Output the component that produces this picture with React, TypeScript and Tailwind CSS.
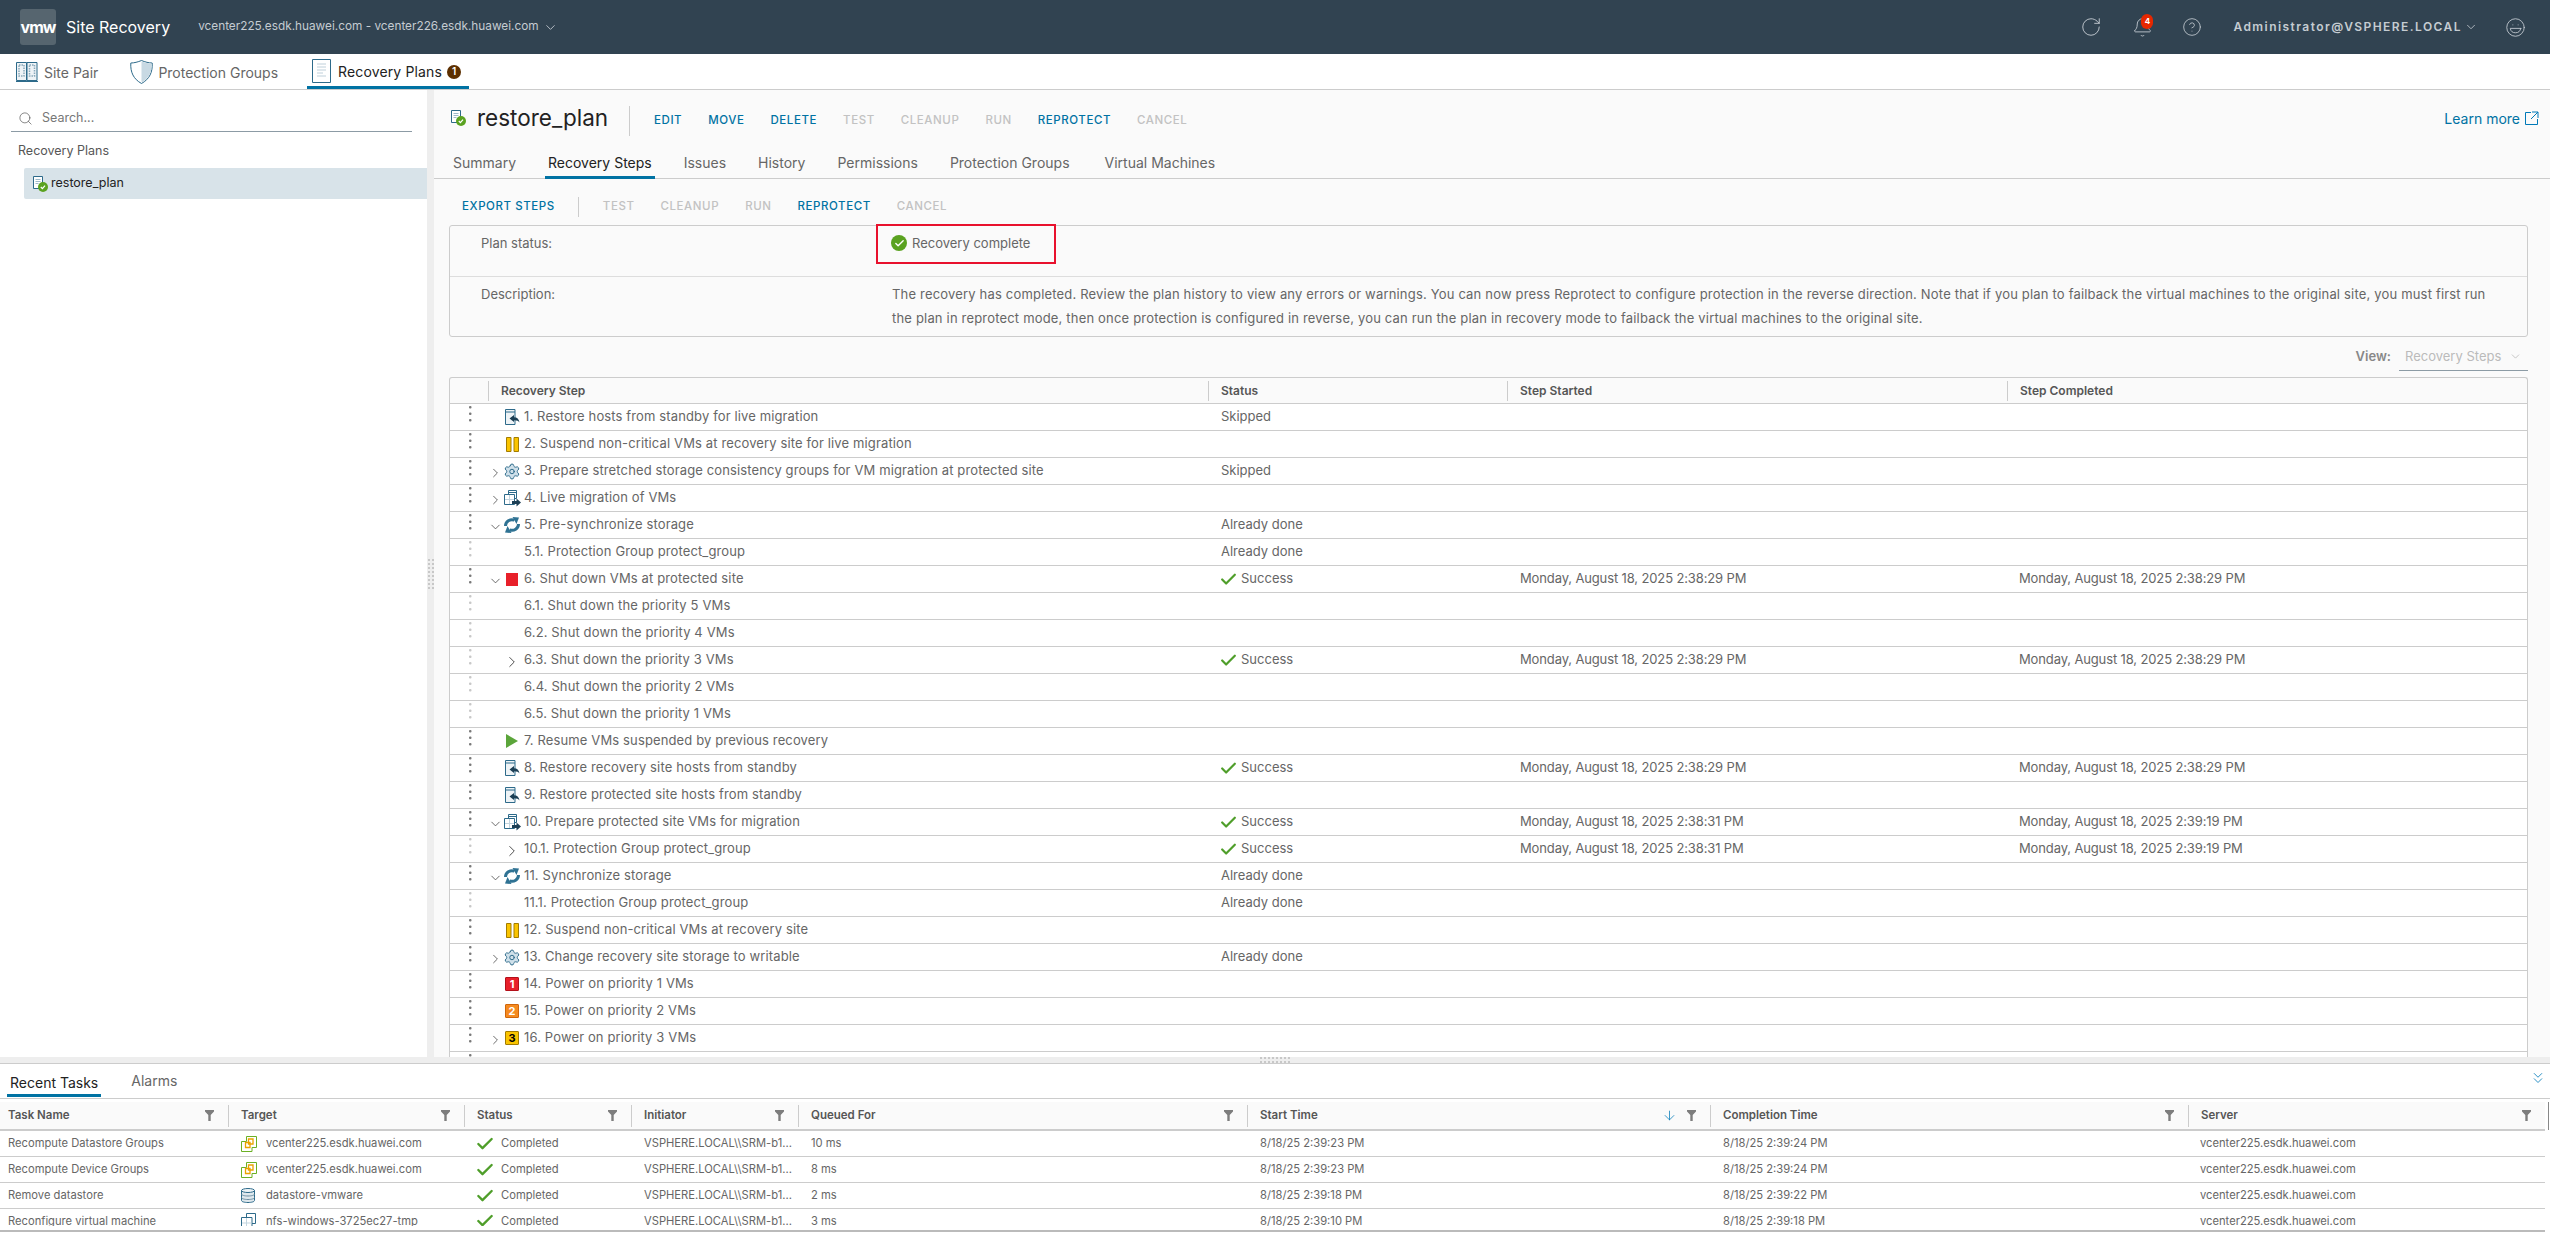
import { ArrowDown, Check, ChevronDown, ChevronRight, ChevronsDown, CircleHelp, Laugh, RotateCw, Search, Settings, Bell } from "lucide-react";

type IconName = "standby" | "suspend" | "gear" | "migrate" | "sync" | "stop" | "play" | "p1" | "p2" | "p3";

type Step = {
  name: string;
  icon?: IconName;
  caret?: "right" | "down";
  sub?: boolean;
  status?: string;
  started?: string;
  completed?: string;
};

const T1 = "Monday, August 18, 2025 2:38:29 PM";
const T2 = "Monday, August 18, 2025 2:38:31 PM";
const T3 = "Monday, August 18, 2025 2:39:19 PM";

const steps: Step[] = [
  { name: "1. Restore hosts from standby for live migration", icon: "standby", status: "Skipped" },
  { name: "2. Suspend non-critical VMs at recovery site for live migration", icon: "suspend" },
  { name: "3. Prepare stretched storage consistency groups for VM migration at protected site", icon: "gear", caret: "right", status: "Skipped" },
  { name: "4. Live migration of VMs", icon: "migrate", caret: "right" },
  { name: "5. Pre-synchronize storage", icon: "sync", caret: "down", status: "Already done" },
  { name: "5.1. Protection Group protect_group", sub: true, status: "Already done" },
  { name: "6. Shut down VMs at protected site", icon: "stop", caret: "down", status: "Success", started: T1, completed: T1 },
  { name: "6.1. Shut down the priority 5 VMs", sub: true },
  { name: "6.2. Shut down the priority 4 VMs", sub: true },
  { name: "6.3. Shut down the priority 3 VMs", sub: true, caret: "right", status: "Success", started: T1, completed: T1 },
  { name: "6.4. Shut down the priority 2 VMs", sub: true },
  { name: "6.5. Shut down the priority 1 VMs", sub: true },
  { name: "7. Resume VMs suspended by previous recovery", icon: "play" },
  { name: "8. Restore recovery site hosts from standby", icon: "standby", status: "Success", started: T1, completed: T1 },
  { name: "9. Restore protected site hosts from standby", icon: "standby" },
  { name: "10. Prepare protected site VMs for migration", icon: "migrate", caret: "down", status: "Success", started: T2, completed: T3 },
  { name: "10.1. Protection Group protect_group", sub: true, caret: "right", status: "Success", started: T2, completed: T3 },
  { name: "11. Synchronize storage", icon: "sync", caret: "down", status: "Already done" },
  { name: "11.1. Protection Group protect_group", sub: true, status: "Already done" },
  { name: "12. Suspend non-critical VMs at recovery site", icon: "suspend" },
  { name: "13. Change recovery site storage to writable", icon: "gear", caret: "right", status: "Already done" },
  { name: "14. Power on priority 1 VMs", icon: "p1" },
  { name: "15. Power on priority 2 VMs", icon: "p2" },
  { name: "16. Power on priority 3 VMs", icon: "p3", caret: "right" },
  { name: "" },
];

const tasks = [
  { name: "Recompute Datastore Groups", icon: "vc", target: "vcenter225.esdk.huawei.com", queued: "10 ms", start: "8/18/25 2:39:23 PM", end: "8/18/25 2:39:24 PM" },
  { name: "Recompute Device Groups", icon: "vc", target: "vcenter225.esdk.huawei.com", queued: "8 ms", start: "8/18/25 2:39:23 PM", end: "8/18/25 2:39:24 PM" },
  { name: "Remove datastore", icon: "ds", target: "datastore-vmware", queued: "2 ms", start: "8/18/25 2:39:18 PM", end: "8/18/25 2:39:22 PM" },
  { name: "Reconfigure virtual machine", icon: "vm", target: "nfs-windows-3725ec27-tmp", queued: "3 ms", start: "8/18/25 2:39:10 PM", end: "8/18/25 2:39:18 PM" },
];

const taskCols = "grid-cols-[228px_236px_167px_167px_449px_463px_478px_357px]";

function PlanIcon() {
  return (
    <svg width="16" height="16" viewBox="0 0 16 16" fill="none">
      <path d="M1.500.5h9v12h-9z" fill="#fff" stroke="#2d6a8a" />
      <path d="M3.500 3.500h5M3.500 5.500h5M3.500 7.500h3" stroke="#9db9c9" />
      <circle cx="11" cy="11" r="5" fill="#5aa220" />
      <path d="M8.800 11l1.600 1.600 2.600-3" stroke="#fff" strokeWidth="1.200" />
    </svg>
  );
}

function StepIcon({ name }: { name: IconName }) {
  if (name === "standby")
    return (
      <svg width="15" height="16" viewBox="0 0 15 16" fill="none" className="-mt-[1px]">
        <path d="M.5.5h9.500v15H.5z" fill="#eef3f6" stroke="#2d6a8a" />
        <path d="M.5 3h9.500" stroke="#2d6a8a" />
        <path d="M4.500 9.500L9 6v2.200c3 0 5 1.600 5.500 5.300-1-1.500-2.500-2.300-5.500-2.300V13z" fill="#1c3f55" />
      </svg>
    );
  if (name === "suspend")
    return (
      <svg width="13" height="15" viewBox="0 0 13 15">
        <path d="M.5.5h4.500v14H.5zM8 .5h4.500v14H8z" fill="#fac400" stroke="#a37c00" />
      </svg>
    );
  if (name === "gear") return <Settings size={19} strokeWidth={1.300} color="#2d6a8a" fill="#cfe0ea" />;
  if (name === "migrate")
    return (
      <svg width="17" height="17" viewBox="0 0 17 17" fill="none">
        <path d="M4.500 4V.5h8v8h-2" stroke="#2d6a8a" />
        <path d="M4.500 2.500h8" stroke="#2d6a8a" />
        <path d="M.5 4.500h10v10H.5z" fill="#fff" stroke="#2d6a8a" />
        <path d="M5.500 5v9M1 9.500h9" stroke="#c3d5df" />
        <path d="M8 11h4.500V8.500l4.500 4-4.500 4V14H8z" fill="#1c3f55" />
      </svg>
    );
  if (name === "sync")
    return (
      <svg width="16" height="16" viewBox="0 0 16 16" fill="none">
        <path d="M1.500 9C1.500 4.500 6 1.500 10.500 3.200" stroke="#2f7293" strokeWidth="3" />
        <path d="M8.500 0l6.500.5L12.500 7z" fill="#2f7293" />
        <path d="M14.500 7c0 4.500-4.500 7.500-9 5.800" stroke="#2f7293" strokeWidth="3" />
        <path d="M7.500 16L1 15.500 3.500 9z" fill="#2f7293" />
      </svg>
    );
  if (name === "stop") return <div className="w-[12px] h-[13px] bg-[#e8202a]" />;
  if (name === "play")
    return (
      <svg width="12" height="14" viewBox="0 0 12 14">
        <path d="M0 0l12 7-12 7z" fill="#5ba53a" />
      </svg>
    );
  const cls =
    name === "p1"
      ? "bg-[#e8202a] border-[#b3101a] text-white"
      : name === "p2"
        ? "bg-[#f58a1f] border-[#d0650a] text-white"
        : "bg-[#fac400] border-[#a37c00] text-black";
  return (
    <div className={`w-[14px] h-[14px] rounded-[1px] border flex items-center justify-center text-[11px] font-bold leading-none ${cls}`}>
      {name.slice(1)}
    </div>
  );
}

function Dots({ light }: { light?: boolean }) {
  return (
    <svg width="3" height="17" viewBox="0 0 3 17" className="mt-[2px] block">
      <g fill={light ? "#c8c8c8" : "#7a7a7a"}>
        <rect x="0" y="0" width="2.500" height="2.500" rx="1" />
        <rect x="0" y="6.500" width="2.500" height="2.500" rx="1" />
        <rect x="0" y="13" width="2.500" height="2.500" rx="1" />
      </g>
    </svg>
  );
}

function Caret({ dir }: { dir: "right" | "down" }) {
  return dir === "right" ? (
    <ChevronRight size={18} strokeWidth={1.300} color="#4a4a4a" className="mt-[3px]" />
  ) : (
    <ChevronDown size={18} strokeWidth={1.300} color="#4a4a4a" className="mt-[3px]" />
  );
}

function StepRow({ step }: { step: Step }) {
  return (
    <div className="grid grid-cols-[38px_720px_299px_500px_1fr] h-[27px] shrink-0 border-b border-[#ccc] bg-white text-[13px] text-[#666]">
      <div className="pl-[19px]">
        <Dots light={step.sub} />
      </div>
      <div className="flex items-center">
        <div className="w-[15px] flex justify-center shrink-0">{!step.sub && step.caret && <Caret dir={step.caret} />}</div>
        <div className="w-[21px] flex justify-center items-center shrink-0 pr-[3px]">
          {step.icon && <StepIcon name={step.icon} />}
          {step.sub && step.caret && <Caret dir={step.caret} />}
        </div>
        <span className="whitespace-nowrap tracking-[0.01em]">{step.name}</span>
      </div>
      <div className="pl-[13px] flex items-center gap-[3px]">
        {step.status === "Success" && <Check size={19} strokeWidth={2.800} color="#4f9e2a" className="-ml-[2px]" />}
        {step.status}
      </div>
      <div className="pl-[13px] flex items-center tracking-[-0.01em]">{step.started}</div>
      <div className="pl-[12px] flex items-center tracking-[-0.01em]">{step.completed}</div>
    </div>
  );
}

function ActionLink({ label, off }: { label: string; off?: boolean }) {
  return (
    <span className={`text-[11.5px] font-medium tracking-[0.05em] whitespace-nowrap ${off ? "text-[#c2c2c2]" : "text-[#0072a3]"}`}>{label}</span>
  );
}

function HeadCell({ label }: { label: string }) {
  return (
    <div className="flex items-center h-full">
      <div className="h-[20px] flex items-center text-[12px] font-semibold text-[#565656] border-l border-[#ccc] pl-[12px]">{label}</div>
    </div>
  );
}

function Filter() {
  return (
    <svg width="9" height="11" viewBox="0 0 9 11" className="shrink-0">
      <path d="M0 0h9v1.500L5.700 5v6H3.300V5L0 1.500z" fill="#7d7d7d" />
    </svg>
  );
}

function TaskHead({ label, first, sort }: { label: string; first?: boolean; sort?: boolean }) {
  return (
    <div className="flex items-center h-full">
      <div className={`h-[22px] w-full flex items-center justify-between pr-[14px] text-[11.5px] font-semibold text-[#565656] ${first ? "pl-[8px]" : "border-l border-[#ccc] pl-[12px]"}`}>
        <span>{label}</span>
        <span className="flex items-center gap-[10px]">
          {sort && <ArrowDown size={15} strokeWidth={1.200} color="#0079b8" />}
          <Filter />
        </span>
      </div>
    </div>
  );
}

function TargetIcon({ kind }: { kind: string }) {
  if (kind === "vc")
    return (
      <svg width="16" height="16" viewBox="0 0 16 16" fill="none">
        <path d="M5.500.5h10v11H11v4H.5v-10h5z" stroke="#6bb024" />
        <path d="M4.500 6.500h4.500v5h-4.500zM7.500 3h4.500v5H7.500z" stroke="#eaa200" strokeWidth="1.300" />
      </svg>
    );
  if (kind === "ds")
    return (
      <svg width="14" height="15" viewBox="0 0 14 15" fill="none">
        <path d="M.5 2.500v10c0 1.200 2.800 2 6.500 2s6.500-.8 6.500-2v-10z" fill="#dfe8ed" stroke="#2d6a8a" />
        <ellipse cx="7" cy="2.500" rx="6.500" ry="2" fill="#eef3f6" stroke="#2d6a8a" />
        <path d="M.5 6c0 1.200 2.800 2 6.500 2s6.500-.8 6.500-2M.5 9.500c0 1.200 2.800 2 6.500 2s6.500-.8 6.500-2" stroke="#6d8fa3" />
      </svg>
    );
  return (
    <svg width="16" height="17" viewBox="0 0 16 17" fill="none">
      <path d="M5.500 4V.5h9v10H11" stroke="#2d6a8a" />
      <path d="M.5 4.500h10.500v12H.5z" fill="#fff" stroke="#2d6a8a" />
      <path d="M5.500 5v11M1 10h9.500" stroke="#c3d5df" />
    </svg>
  );
}

function Grip({ vertical }: { vertical?: boolean }) {
  const dots = Array.from({ length: 16 });
  return (
    <div className={`grid gap-[2px] ${vertical ? "grid-cols-2" : "grid-cols-8"}`}>
      {dots.map((_, i) => (
        <div key={i} className="w-[2px] h-[2px] bg-[#c8c8c8]" />
      ))}
    </div>
  );
}

function TaskCells({ t }: { t: (typeof tasks)[number] }) {
  return (
    <>
      <div className="pl-[8px] flex items-center whitespace-nowrap overflow-hidden">{t.name}</div>
      <div className="pl-[13px] flex items-center whitespace-nowrap overflow-hidden">
        <div className="w-[25px] shrink-0">
          <TargetIcon kind={t.icon} />
        </div>
        {t.target}
      </div>
      <div className="pl-[13px] flex items-center gap-[6px] overflow-hidden">
        <Check size={20} strokeWidth={2.800} color="#4f9e2a" className="-ml-[2px] shrink-0" />
        Completed
      </div>
      <div className="pl-[13px] flex items-center whitespace-nowrap overflow-hidden">VSPHERE.LOCAL\\SRM-b1...</div>
      <div className="pl-[13px] flex items-center overflow-hidden">{t.queued}</div>
      <div className="pl-[13px] flex items-center overflow-hidden">{t.start}</div>
      <div className="pl-[13px] flex items-center overflow-hidden">{t.end}</div>
      <div className="pl-[12px] flex items-center overflow-hidden">vcenter225.esdk.huawei.com</div>
    </>
  );
}

export default function App() {
  return (
    <div className="w-[2550px] h-[1233px] overflow-hidden flex flex-col bg-white font-['Inter','Noto_Sans',sans-serif] text-[#565656]">
      <header className="h-[54px] shrink-0 bg-[#314351] flex items-center pl-[20px] pr-[24px]">
        <div className="w-[36px] h-[36px] rounded-[3px] bg-[#56656f] flex items-center justify-center text-white text-[16px] font-bold tracking-[-0.06em]">vmw</div>
        <div className="ml-[10px] text-[16px] text-white">Site Recovery</div>
        <div className="ml-[28px] text-[11.8px] text-[#c5ccd2]">vcenter225.esdk.huawei.com - vcenter226.esdk.huawei.com</div>
        <ChevronDown size={15} strokeWidth={1.400} color="#c5ccd2" className="ml-[4px]" />
        <div className="ml-auto flex items-center">
          <RotateCw size={22} strokeWidth={1} color="#c5ccd2" />
          <div className="relative ml-[30px]">
            <Bell size={21} strokeWidth={1} color="#c5ccd2" />
            <span className="absolute top-[-3px] left-[9px] w-[12px] h-[15px] rounded-full bg-[#e62700] text-white text-[8px] font-bold flex items-center justify-center">4</span>
          </div>
          <CircleHelp size={20} strokeWidth={1} color="#c5ccd2" className="ml-[29px]" />
          <div className="ml-[31px] text-[12px] font-semibold tracking-[0.12em] text-[#c5ccd2]">Administrator@VSPHERE.LOCAL</div>
          <ChevronDown size={14} strokeWidth={1.400} color="#c5ccd2" className="ml-[2px]" />
          <Laugh size={21} strokeWidth={1} color="#c5ccd2" className="ml-[27px]" />
        </div>
      </header>

      <nav className="h-[36px] shrink-0 border-b border-[#ccc] flex text-[14px]">
        <div className="flex items-center pl-[16px] gap-[6px] text-[#666]">
          <svg width="22" height="20" viewBox="0 0 22 20" fill="none">
            <path d="M.5.5h10v18H.5zM11 .5h10v18H11z" stroke="#2d6a8a" fill="#eef3f6" />
            <path d="M0 19.500h22" stroke="#2d6a8a" />
            <path d="M3 3h5v11H3zM13.500 3h5v11h-5z" stroke="#8aa9bb" strokeWidth="1.500" strokeDasharray="1.500 1" />
          </svg>
          <span className="mt-[2px]">Site Pair</span>
        </div>
        <div className="flex items-center ml-[32px] gap-[5px] text-[#666]">
          <svg width="23" height="24" viewBox="0 0 23 24" fill="none">
            <path d="M11.500.5C8 2 4 3 .8 3c-.5 9 2.500 16 10.700 20.500C19.700 19 22.700 12 22.200 3 19 3 15 2 11.500.5z" stroke="#2d6a8a" fill="#fff" />
            <path d="M11.500 1.500v21C19 18.500 22 12 21.500 3.500c-3.500 0-6.500-1-10-2z" fill="#c8d9e3" />
          </svg>
          <span className="mt-[2px]">Protection Groups</span>
        </div>
        <div className="flex items-center ml-[29px] px-[5px] h-[35px] gap-[7px] border-b-[3px] border-[#0072a3] text-[#222] w-[162px]">
          <svg width="19" height="24" viewBox="0 0 19 24" fill="none" className="mt-[2px]">
            <path d="M.5.5h18v23H.5z" stroke="#2d6a8a" fill="#fff" />
            <path d="M5 5h9M5 8h9M5 11h9M5 14h6M5 17h9" stroke="#bfd0da" />
          </svg>
          <span className="mt-[3px] tracking-[0.01em] whitespace-nowrap">Recovery Plans</span>
          <span className="mt-[3px] w-[14px] h-[14px] rounded-full bg-[#5c2f00] text-white text-[10px] font-semibold flex items-center justify-center shrink-0 -ml-[2px]">1</span>
        </div>
      </nav>

      <main className="flex-1 min-h-0 flex">
        <aside className="w-[427px] shrink-0 bg-white pt-[16px] text-[#565656]">
          <div className="ml-[11px] mr-[15px] h-[26px] border-b border-[#8c9ba5] flex items-center gap-[9px] pl-[7px] text-[12.5px] text-[#777]">
            <Search size={15} strokeWidth={1} color="#444" />
            Search...
          </div>
          <div className="mt-[10px] ml-[18px] text-[12.5px] leading-[18px]">Recovery Plans</div>
          <div className="mt-[8px] ml-[24px] h-[31px] bg-[#d8e3e9] rounded-l-[2px] flex items-center pl-[8px] gap-[3px] text-[12.5px] text-[#222]">
            <PlanIcon />
            restore_plan
          </div>
        </aside>
        <div className="w-[7px] shrink-0 bg-[#eee] flex items-center justify-center">
          <Grip vertical />
        </div>
        <section className="flex-1 min-w-0 bg-[#fafafa] flex flex-col overflow-hidden">
          <div className="h-[56px] shrink-0 flex items-center pl-[16px] pr-[11px]">
            <PlanIcon />
            <div className="ml-[11px] w-[132px] text-[22.5px] text-[#222] whitespace-nowrap">restore_plan</div>
            <div className="ml-[20px] mt-[6px] h-[30px] border-l border-[#ccc]" />
            <div className="ml-[24px] mt-[5px] flex items-center gap-[26px]">
              <ActionLink label="EDIT" />
              <ActionLink label="MOVE" />
              <ActionLink label="DELETE" />
              <ActionLink label="TEST" off />
              <ActionLink label="CLEANUP" off />
              <ActionLink label="RUN" off />
              <ActionLink label="REPROTECT" />
              <ActionLink label="CANCEL" off />
            </div>
            <div className="ml-auto flex items-center gap-[5px] text-[14px] text-[#0072a3]">
              Learn more
              <svg width="14" height="14" viewBox="0 0 14 14" fill="none" stroke="#0079b8">
                <path d="M6 1.500H.5v12h12V8M7 1h6v6M13 1L6 8" />
              </svg>
            </div>
          </div>

          <div className="h-[33px] shrink-0 border-b border-[#ccc] flex pl-[16px] gap-[26px] text-[14px] text-[#666]">
            <div className="px-[3px] flex items-center">Summary</div>
            <div className="px-[3px] flex items-center border-b-[3px] border-[#0072a3] text-[#222] pt-[3px] h-[33px]">Recovery Steps</div>
            <div className="px-[3px] flex items-center">Issues</div>
            <div className="px-[3px] flex items-center">History</div>
            <div className="px-[3px] flex items-center">Permissions</div>
            <div className="px-[3px] flex items-center">Protection Groups</div>
            <div className="px-[3px] flex items-center ml-[3px]">Virtual Machines</div>
          </div>

          <div className="flex-1 min-h-0 pl-[15px] pr-[22px] flex flex-col overflow-hidden">
            <div className="h-[46px] shrink-0 pt-[10px] flex items-center pl-[13px]">
              <ActionLink label="EXPORT STEPS" />
              <div className="ml-[23px] h-[20px] border-l border-[#ccc]" />
              <div className="ml-[24px] flex items-center gap-[26px]">
                <ActionLink label="TEST" off />
                <ActionLink label="CLEANUP" off />
                <ActionLink label="RUN" off />
                <ActionLink label="REPROTECT" />
                <ActionLink label="CANCEL" off />
              </div>
            </div>

            <div className="relative h-[112px] shrink-0 border border-[#ccc] rounded-[3px] text-[13px] text-[#666]">
              <div className="h-[51px] border-b border-[#ddd] grid grid-cols-[442px_1fr] pt-[5px] leading-[24px]">
                <div className="pl-[31px]">Plan status:</div>
                <div className="flex items-center gap-[5px] h-[24px]">
                  <span className="w-[16px] h-[16px] rounded-full bg-[#5aa220] flex items-center justify-center -ml-[1px]">
                    <Check size={11} strokeWidth={3} color="#fff" />
                  </span>
                  Recovery complete
                </div>
              </div>
              <div className="grid grid-cols-[442px_1fr] pt-[5px] leading-[24px]">
                <div className="pl-[31px]">Description:</div>
                <div className="pr-[30px] tracking-[0.014em]">
                  The recovery has completed. Review the plan history to view any errors or warnings. You can now press Reprotect to configure protection in the reverse direction. Note that if you plan to failback the virtual machines to the original site, you must first run the plan in reprotect mode, then once protection is configured in reverse, you can run the plan in recovery mode to failback the virtual machines to the original site.
                </div>
              </div>
              <div className="absolute left-[426px] top-[-2px] w-[180px] h-[40px] border-2 border-[#e8112d]" />
            </div>

            <div className="h-[40px] shrink-0 flex items-center justify-end text-[13px]">
              <span className="font-semibold text-[#888] mr-[8px]">View:</span>
              <div className="w-[129px] h-[27px] border-b border-[#8c9ba5] flex items-center justify-between pl-[6px] pr-[6px] text-[#bbb]">
                Recovery Steps
                <ChevronDown size={13} strokeWidth={1.200} color="#aaa" />
              </div>
            </div>

            <div className="flex-1 min-h-0 border border-b-0 border-[#ccc] rounded-t-[3px] flex flex-col overflow-hidden">
              <div className="grid grid-cols-[38px_720px_299px_500px_1fr] h-[26px] shrink-0 border-b border-[#ccc]">
                <div />
                <HeadCell label="Recovery Step" />
                <HeadCell label="Status" />
                <HeadCell label="Step Started" />
                <HeadCell label="Step Completed" />
              </div>
              {steps.map((step, i) => (
                <StepRow key={i} step={step} />
              ))}
            </div>
          </div>
        </section>
      </main>

      <div className="h-[7px] shrink-0 bg-[#eee] border-b border-[#ccc] flex items-center justify-center">
        <Grip />
      </div>

      <div className="h-[169px] shrink-0 bg-white flex flex-col overflow-hidden">
        <div className="h-[35px] shrink-0 border-b border-[#ccc] flex items-end pl-[7px] text-[14px] relative">
          <div className="px-[3px] h-[33px] mb-[1px] pt-[6px] flex items-center border-b-[3px] border-[#0072a3] text-[#222]">Recent Tasks</div>
          <div className="ml-[30px] h-[33px] mb-[1px] pb-[1px] flex items-center text-[#666]">Alarms</div>
          <ChevronsDown size={18} strokeWidth={1.100} color="#0079b8" className="absolute right-[3px] top-[5px]" />
        </div>
        <div className="relative mt-[3px] w-[2545px] shrink-0">
          <div className={`grid ${taskCols} h-[29px] bg-[#fafafa] border-b-2 border-[#ccc]`}>
            <TaskHead label="Task Name" first />
            <TaskHead label="Target" />
            <TaskHead label="Status" />
            <TaskHead label="Initiator" />
            <TaskHead label="Queued For" />
            <TaskHead label="Start Time" sort />
            <TaskHead label="Completion Time" />
            <TaskHead label="Server" />
          </div>
          <div className="absolute left-[2548px] top-0 h-[28px] w-px bg-[#888]" />
          {tasks.slice(0, 3).map((t, i) => (
            <div key={i} className={`grid ${taskCols} h-[26px] text-[11.2px] text-[#666] border-b border-[#ccc]`}>
              <TaskCells t={t} />
            </div>
          ))}
          {/* last row is cut by the panel edge, the line sits below the clip */}
          <div className="h-[23px] border-b-2 border-[#bbb]">
            <div className="h-[17px] overflow-hidden">
              <div className={`grid ${taskCols} h-[24px] text-[11.2px] text-[#666]`}>
                <TaskCells t={tasks[3]} />
              </div>
            </div>
          </div>
        </div>
      </div>
    </div>
  );
}
